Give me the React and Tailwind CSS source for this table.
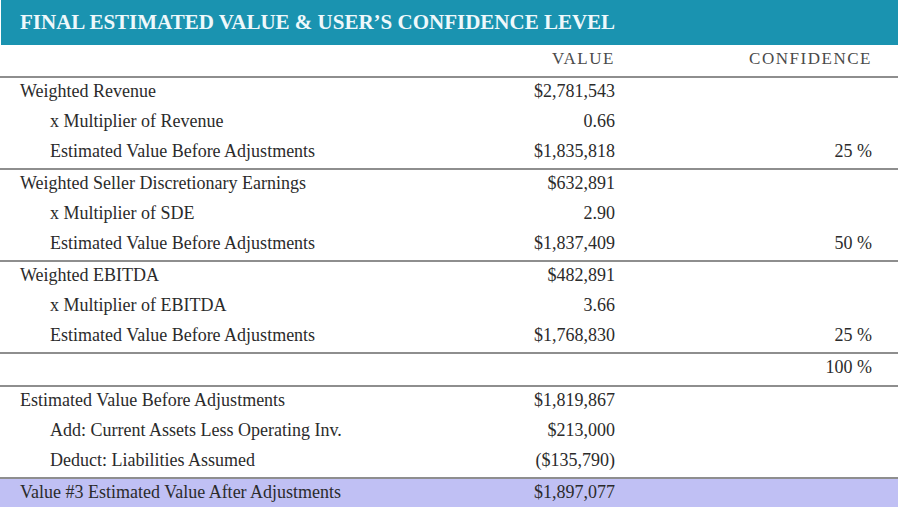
const groups = [
  [
    ['Weighted Revenue', '$2,781,543', ''],
    ['x Multiplier of Revenue', '0.66', '', true],
    ['Estimated Value Before Adjustments', '$1,835,818', '25 %', true],
  ],
  [
    ['Weighted Seller Discretionary Earnings', '$632,891', ''],
    ['x Multiplier of SDE', '2.90', '', true],
    ['Estimated Value Before Adjustments', '$1,837,409', '50 %', true],
  ],
  [
    ['Weighted EBITDA', '$482,891', ''],
    ['x Multiplier of EBITDA', '3.66', '', true],
    ['Estimated Value Before Adjustments', '$1,768,830', '25 %', true],
  ],
  [['', '', '100 %']],
  [
    ['Estimated Value Before Adjustments', '$1,819,867', ''],
    ['Add: Current Assets Less Operating Inv.', '$213,000', '', true],
    ['Deduct: Liabilities Assumed', '($135,790)', '', true],
  ],
];

function Row({ label, value, conf, indent, tall }) {
  return (
    <div className={`flex items-center ${tall ? 'h-[31px]' : 'h-[30px]'} pb-[4px] text-[18px] text-[#2b2b2b]`}>
      <div className={`flex-1 ${indent ? 'pl-[50px]' : 'pl-[20px]'}`}>{label}</div>
      <div className="w-[200px] text-right">{value}</div>
      <div className="w-[257px] text-right">{conf}</div>
      <div className="w-[26px]" />
    </div>
  );
}

export default function App() {
  return (
    <div className="w-[898px] h-[511px] bg-white overflow-hidden" style={{ fontFamily: '"Liberation Serif", serif' }}>
      <div className="h-[45px] ml-[1px] bg-[#1a93b0] flex items-center pl-[19px]">
        <span className="text-[21px] font-bold text-[#eef8fb]">
          FINAL ESTIMATED VALUE &amp; USER’S CONFIDENCE LEVEL
        </span>
      </div>
      <div className="flex items-center h-[31px] pb-[4px] text-[17px] tracking-[0.09em] text-[#4a4a4a]">
        <div className="flex-1" />
        <div className="w-[200px] text-right">VALUE</div>
        <div className="w-[257px] text-right">CONFIDENCE</div>
        <div className="w-[26px]" />
      </div>
      {groups.map((rows, i) => (
        <div key={i} className="border-t-2 border-[#8e8e8e]">
          {rows.map((r, j) => (
            <Row key={j} label={r[0]} value={r[1]} conf={r[2]} indent={r[3]} tall={rows.length === 1} />
          ))}
        </div>
      ))}
      <div className="border-t-2 border-[#8e8e8e] bg-[#c0c0f4]">
        <div className="flex items-center h-[28px] pb-[2px] text-[18px] text-[#2b2b2b]">
          <div className="flex-1 pl-[20px]">Value #3 Estimated Value After Adjustments</div>
          <div className="w-[200px] text-right">$1,897,077</div>
          <div className="w-[283px]" />
        </div>
      </div>
    </div>
  );
}
